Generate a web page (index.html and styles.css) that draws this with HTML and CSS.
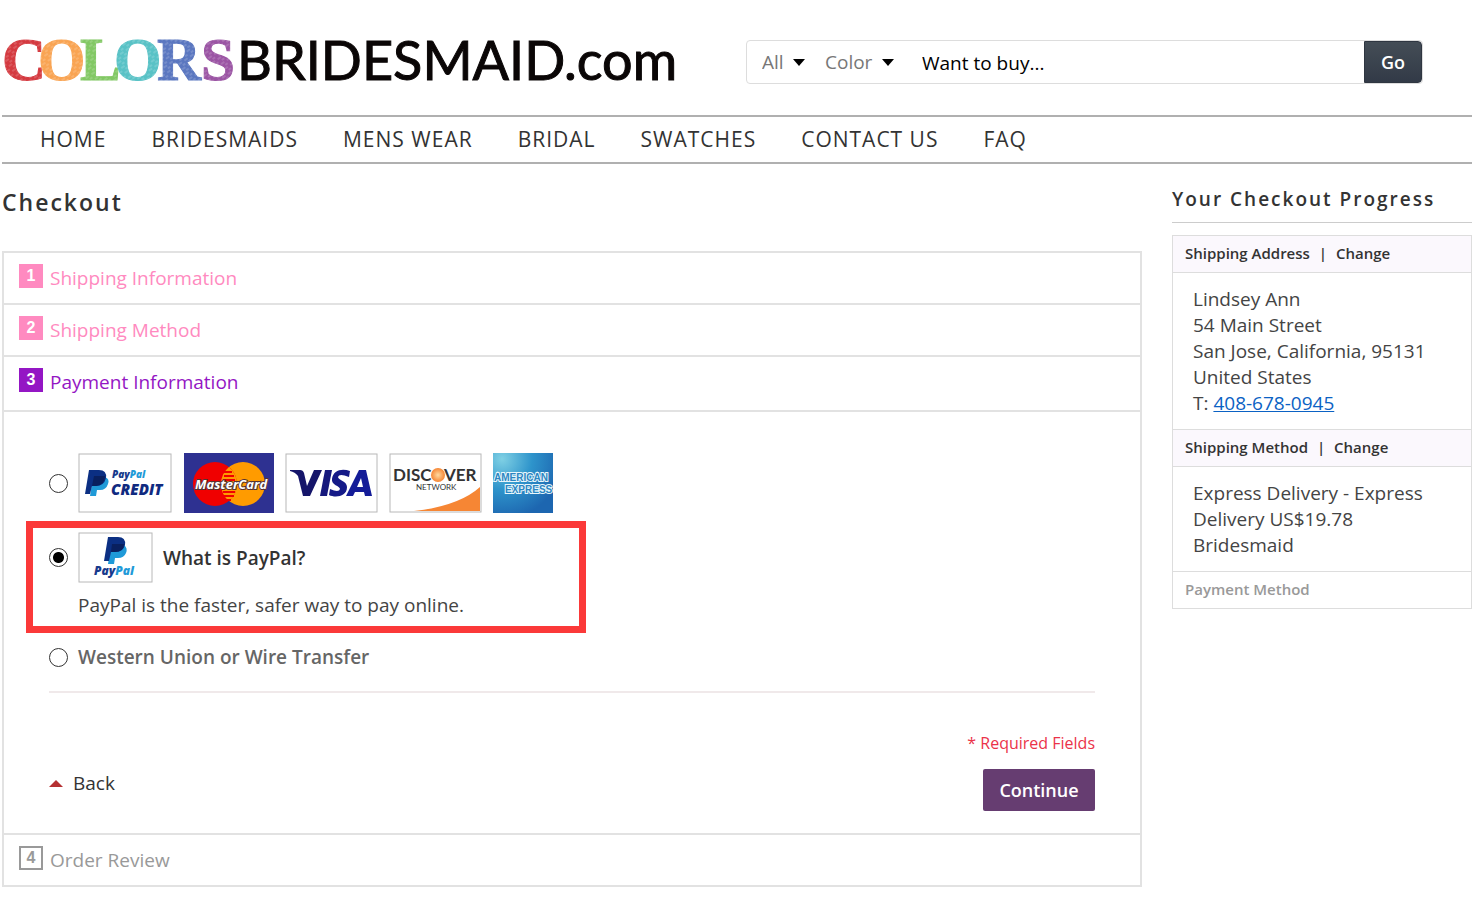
FILE: index.html
```html
<!DOCTYPE html>
<html lang="en">

<head>
    <meta charset="utf-8">
    <meta name="viewport" content="width=device-width, initial-scale=1">
    <title>Checkout</title>
    <link rel="stylesheet" href="styles.css">
</head>

<body>
    <header class="header">
        <a class="logo" href="#">
            <svg width="690" height="60" viewBox="0 0 690 60" role="img" aria-label="ColorsBridesmaid.com">
                <defs>
                    <pattern id="chalk" width="7" height="6" patternUnits="userSpaceOnUse" patternTransform="rotate(-35)">
                        <path d="M0 2h4M3 5h3" stroke="#fff" stroke-width="1" opacity=".3" />
                    </pattern>
                </defs>
                <g class="logo-colors">
                    <text x="0" y="48" fill="#d43a40" stroke="#d43a40">C</text>
                    <text x="36" y="48" fill="#f9a453" stroke="#f9a453">O</text>
                    <text x="78" y="48" fill="#82c864" stroke="#82c864">L</text>
                    <text x="112" y="48" fill="#59c2c6" stroke="#59c2c6">O</text>
                    <text x="155" y="48" fill="#5b77c0" stroke="#5b77c0">R</text>
                    <text x="199" y="48" fill="#9b55a4" stroke="#9b55a4">S</text>
                </g>
                <rect x="0" y="5" width="236" height="46" fill="url(#chalk)" />
                <text class="logo-name" x="235" y="48">BRIDESMAID.com</text>
            </svg>
        </a>
        <form class="search">
            <label class="picker">
                <select class="picker-select" aria-label="Category">
                    <option>All</option>
                </select>
            </label>
            <label class="picker">
                <select class="picker-select" aria-label="Color">
                    <option>Color</option>
                </select>
            </label>
            <input class="search-input" type="text" aria-label="Search" value="Want to buy...">
            <button class="search-button" type="submit">Go</button>
        </form>
    </header>

    <nav class="nav">
        <a href="#">HOME</a>
        <a href="#">BRIDESMAIDS</a>
        <a href="#">MENS WEAR</a>
        <a href="#">BRIDAL</a>
        <a href="#">SWATCHES</a>
        <a href="#">CONTACT US</a>
        <a href="#">FAQ</a>
    </nav>

    <div class="columns">
        <main class="main">
            <h1 class="page-title">Checkout</h1>
            <ol class="steps">
                <li class="step done">
                    <h2 class="step-title"><span class="number">1</span>Shipping Information</h2>
                </li>
                <li class="step done">
                    <h2 class="step-title"><span class="number">2</span>Shipping Method</h2>
                </li>
                <li class="step active">
                    <h2 class="step-title"><span class="number">3</span>Payment Information</h2>
                    <form class="payment">
                        <div class="option">
                            <input class="radio" type="radio" name="payment" id="pay_card" aria-label="Credit card">
                            <label class="cards" for="pay_card">
                                <!-- PayPal Credit -->
                                <svg width="95" height="60" viewBox="0 0 95 60">
                                    <rect class="card-edge" x="1" y="1" width="92" height="58" />
                                    <path d="M15 24h12q5 2 3 7-2 6-8 6h-3l-1 6h-6z" fill="#1f9ad8" />
                                    <path d="M11 17h10q8 0 7 8-2 8-10 8h-4l-2 8H7z" fill="#0b2f83" />
                                    <path d="M16 23h11q0 9-9 10h-4z" fill="#09205f" />
                                    <text class="card-paypal" x="34" y="25" font-size="10"><tspan fill="#173a8c">Pay</tspan><tspan fill="#1f9ad8">Pal</tspan></text>
                                    <text class="card-paypal" x="33" y="42" font-size="15" fill="#102a80">CREDIT</text>
                                </svg>
                                <!-- MasterCard -->
                                <svg width="90" height="60" viewBox="0 0 90 60">
                                    <rect width="90" height="60" fill="#2e3191" />
                                    <circle cx="59" cy="31" r="22" fill="#ff9b00" />
                                    <circle cx="31" cy="31" r="22" fill="#f00000" />
                                    <path d="M45 14a22 22 0 0 1 0 34 22 22 0 0 1 0-34" fill="#ff9b00" />
                                    <path d="M40 19h8M40 23h10M39 27h12M39 39h12M40 43h10M41 47h6" stroke="#f00000" stroke-width="2" />
                                    <text class="card-master" x="11" y="36">MasterCard</text>
                                </svg>
                                <!-- Visa -->
                                <svg width="93" height="60" viewBox="0 0 93 60">
                                    <rect class="card-edge" x="1" y="1" width="91" height="58" />
                                    <path d="M5 17h10q3 0 4 3l3 13 7-16h8L25 43h-7l-5-20q-3-4-8-5z" fill="#15156a" />
                                    <path d="M40 17h7l-5 26h-7z" fill="#15187d" />
                                    <path d="M65 18l-1 6q-10-4-11 0c0 3 9 4 9 10 0 10-12 11-18 8l1-6q9 4 10 0c0-3-9-4-8-10 1-9 10-11 18-8z" fill="#151a88" />
                                    <path d="M74 17h7l6 26h-7l-1-4h-9l-2 4h-7zm2 8-4 9h6z" fill="#141c98" fill-rule="evenodd" />
                                </svg>
                                <!-- Discover -->
                                <svg width="93" height="60" viewBox="0 0 93 60">
                                    <defs>
                                        <radialGradient id="disc">
                                            <stop offset="0" stop-color="#ffd9a0" />
                                            <stop offset="1" stop-color="#f68634" />
                                        </radialGradient>
                                    </defs>
                                    <rect class="card-edge" x="1" y="1" width="91" height="58" />
                                    <path d="M25 58Q70 53 91 34v24z" fill="#f68634" />
                                    <text class="card-discover" x="4" y="28">DISC</text>
                                    <circle cx="49" cy="22" r="7" fill="url(#disc)" />
                                    <text class="card-discover" x="55" y="28">VER</text>
                                    <text class="card-network" x="27" y="37">NETWORK</text>
                                </svg>
                                <!-- American Express -->
                                <svg width="60" height="60" viewBox="0 0 60 60">
                                    <defs>
                                        <radialGradient id="amex" cx=".15" cy=".1" r="1">
                                            <stop offset="0" stop-color="#7fd0e4" />
                                            <stop offset=".5" stop-color="#2e94cb" />
                                            <stop offset="1" stop-color="#1d66b0" />
                                        </radialGradient>
                                    </defs>
                                    <rect width="60" height="60" fill="url(#amex)" />
                                    <text class="card-amex" x="1" y="28">AMERICAN</text>
                                    <text class="card-amex" x="12" y="40">EXPRESS</text>
                                </svg>
                            </label>
                        </div>
                        <div class="option highlight">
                            <div class="option-row">
                                <input class="radio" type="radio" name="payment" id="pay_paypal" checked>
                                <label class="paypal-label" for="pay_paypal">
                                    <svg width="75" height="51" viewBox="0 0 75 51">
                                        <rect class="card-edge" x="1" y="1" width="73" height="49" />
                                        <path d="M33 13h13q4 3 2 8-2 5-8 5h-3l-1 6h-6z" fill="#1f9ad8" />
                                        <path d="M30 5h10q8 0 7 8-2 7-10 7h-4l-2 9h-5z" fill="#0b2f83" />
                                        <path d="M34 12h12q0 8-9 8h-4z" fill="#09205f" />
                                        <text class="card-paypal" x="16" y="43" font-size="12"><tspan fill="#173a8c">Pay</tspan><tspan fill="#1f9ad8">Pal</tspan></text>
                                    </svg>
                                    What is PayPal?
                                </label>
                            </div>
                            <p class="option-note">PayPal is the faster, safer way to pay online.</p>
                        </div>
                        <div class="option wire">
                            <input class="radio" type="radio" name="payment" id="pay_wire">
                            <label class="wire-label" for="pay_wire">Western Union or Wire Transfer</label>
                        </div>
                        <p class="required">* Required Fields</p>
                        <div class="buttons">
                            <a class="back" href="#">Back</a>
                            <button class="continue" type="submit">Continue</button>
                        </div>
                    </form>
                </li>
                <li class="step">
                    <h2 class="step-title"><span class="number">4</span>Order Review</h2>
                </li>
            </ol>
        </main>

        <aside class="sidebar">
            <h2 class="sidebar-title">Your Checkout Progress</h2>
            <div class="progress">
                <h3 class="progress-title">Shipping Address <span class="separator">|</span> <a href="#">Change</a></h3>
                <address class="progress-text">
                    Lindsey Ann<br>
                    54 Main Street<br>
                    San Jose, California, 95131<br>
                    United States<br>
                    T: <a class="phone" href="tel:4086780945">408-678-0945</a>
                </address>
                <h3 class="progress-title">Shipping Method <span class="separator">|</span> <a href="#">Change</a></h3>
                <p class="progress-text">
                    Express Delivery - Express Delivery US$19.78 Bridesmaid
                </p>
                <h3 class="progress-title pending">Payment Method</h3>
            </div>
        </aside>
    </div>
</body>

</html>
```

FILE: styles.css
```css
* {
    box-sizing: border-box;
}

body {
    margin: 0;
    padding: 0 3px 0 2px;
    background-color: #fff;
    font-family: "Open Sans", sans-serif;
    font-size: 19px;
    color: #444;
}

h1,
h2,
h3,
p,
ol {
    margin: 0;
    padding: 0;
    font-weight: normal;
}

a {
    color: inherit;
    text-decoration: none;
}

svg {
    display: block;
}

/* header */
.header {
    display: flex;
    justify-content: space-between;
    align-items: center;
    height: 115px;
    padding: 9px 49px 0 0;
}

.logo-colors {
    font-family: "Liberation Serif", serif;
    font-size: 61px;
    font-weight: bold;
    stroke-width: 1px;
}

.logo-name {
    font-family: Lato, sans-serif;
    font-size: 54px;
    fill: #0a0606;
    stroke: #0a0606;
    stroke-width: 1px;
}

.search {
    display: flex;
    width: 677px;
    height: 44px;
    border: 1px solid #ddd;
    border-radius: 4px;
    padding-left: 15px;
}

.picker {
    display: flex;
    align-items: center;
    margin-right: 20px;
}

.picker::after {
    content: "";
    border: 6px solid transparent;
    border-top: 7px solid #000;
    border-bottom: 0;
    margin-left: 9px;
}

.picker-select {
    appearance: none;
    border: 0;
    padding: 0;
    background: none;
    font: inherit;
    color: #777;
}

.search-input {
    flex: 1;
    min-width: 0;
    border: 0;
    padding: 2px 8px 0;
    background: none;
    font: inherit;
    color: #000;
}

.search-button {
    width: 58px;
    border: 1px solid #2f3641;
    border-radius: 0 4px 4px 0;
    background: linear-gradient(#444d56, #323a47);
    font: inherit;
    font-size: 18px;
    font-weight: 600;
    color: #fff;
}

.nav {
    display: flex;
    flex-wrap: wrap;
    gap: 45px;
    padding: 0 38px;
    border-top: 2px solid #b0b0b0;
    border-bottom: 2px solid #b0b0b0;
    font-size: 21px;
    line-height: 45px;
    letter-spacing: 1px;
    color: #333;
}

/* page */
.columns {
    display: grid;
    grid-template-columns: 1fr 300px;
    gap: 30px;
}

.page-title {
    margin: 22px 0 33px;
    font-size: 23px;
    font-weight: 600;
    line-height: 32px;
    letter-spacing: 2px;
    color: #333;
}

.steps {
    list-style: none;
    border: 2px solid #e2e2e2;
    border-top: 0;
}

.step {
    border-top: 2px solid #e2e2e2;
    color: #999;
}

.step-title {
    display: flex;
    align-items: center;
    gap: 7px;
    height: 50px;
    padding: 0 15px;
    font-size: 19px;
}

.number {
    width: 24px;
    height: 24px;
    margin-bottom: 4px;
    border: 2px solid #999;
    font-family: "Liberation Sans", sans-serif;
    font-size: 16px;
    font-weight: bold;
    line-height: 20px;
    text-align: center;
}

.done {
    color: #ff8ac0;
}

.done .number {
    border-color: #ff8ac0;
    background-color: #ff8ac0;
    color: #fff;
}

.active .step-title {
    height: 53px;
    padding-bottom: 3px;
    color: #9416c4;
}

.active .number {
    border-color: #9416c4;
    background-color: #9416c4;
    color: #fff;
}

/* payment options */
.payment {
    padding: 41px 45px 22px;
    border-top: 2px solid #e2e2e2;
}

.option {
    display: flex;
    align-items: center;
}

.radio {
    appearance: none;
    flex: none;
    width: 19px;
    height: 19px;
    margin: 0 10px 0 0;
    border: 1px solid #333;
    border-radius: 50%;
    background-color: #fff;
}

.radio:checked {
    background-image: radial-gradient(circle, #000 5px, transparent 6px);
}

.cards {
    display: flex;
    gap: 11px;
}

.card-edge {
    fill: #fff;
    stroke: #b8b8b8;
    stroke-width: 1px;
}

.card-paypal {
    font-family: "Open Sans", sans-serif;
    font-weight: 800;
    font-style: italic;
}

.card-master {
    font-family: "Open Sans", sans-serif;
    font-size: 13px;
    font-weight: 700;
    font-style: italic;
    fill: #fff;
    stroke: #533;
    stroke-width: 2px;
    paint-order: stroke;
}

.card-discover {
    font-family: Lato, sans-serif;
    font-size: 17px;
    font-weight: bold;
    fill: #333;
}

.card-network {
    font-family: Lato, sans-serif;
    font-size: 8px;
    fill: #333;
}

.card-amex {
    font-family: "Liberation Sans", sans-serif;
    font-size: 10px;
    font-weight: bold;
    fill: #2b86c2;
    stroke: #e8f6fb;
    stroke-width: 2px;
    paint-order: stroke;
}

.highlight {
    display: block;
    width: 560px;
    max-width: 100%;
    margin: 8px 0 0 -23px;
    padding: 4px 16px 7px;
    border: 7px solid #fb3939;
}

.option-row {
    display: flex;
    align-items: center;
}

.paypal-label {
    display: flex;
    align-items: center;
    gap: 10px;
    font-weight: 600;
    color: #333;
}

.option-note {
    margin: 8px 0 0 29px;
    line-height: 28px;
    color: #444;
}

.wire {
    padding: 12px 0 22px;
    border-bottom: 2px solid #f0e9ea;
}

.wire-label {
    font-weight: 600;
    line-height: 24px;
    color: #666;
}

.required {
    margin: 38px 0 14px;
    font-size: 16px;
    line-height: 24px;
    text-align: right;
    color: #eb3349;
}

.buttons {
    display: flex;
    justify-content: space-between;
    align-items: center;
}

.back {
    display: flex;
    align-items: center;
    gap: 10px;
    margin-bottom: 14px;
    color: #333;
}

.back::before {
    content: "";
    border: 7px solid transparent;
    border-top: 0;
    border-bottom: 7px solid #b53032;
}

.continue {
    width: 112px;
    height: 42px;
    border: 0;
    border-radius: 2px;
    background-color: #663d71;
    font: inherit;
    font-size: 18px;
    font-weight: 600;
    color: #fff;
}

/* progress column */
.sidebar-title {
    margin: 19px 0 12px;
    padding-bottom: 7px;
    border-bottom: 1px solid #ccc;
    font-size: 19px;
    font-weight: 600;
    line-height: 32px;
    letter-spacing: 2px;
    color: #333;
}

.progress {
    border: 1px solid #ddd;
    border-top: 0;
}

.progress-title {
    padding: 0 12px 1px;
    border-top: 1px solid #ddd;
    background-color: #fbf8fd;
    font-size: 15px;
    font-weight: 600;
    line-height: 35px;
    color: #333;
}

.separator {
    margin: 0 5px;
}

.progress-text {
    padding: 13px 20px;
    border-top: 1px solid #ddd;
    font-style: normal;
    line-height: 26px;
}

.phone {
    color: #0b62c4;
    text-decoration: underline;
}

.pending {
    background-color: #fff;
    color: #999;
}
```
